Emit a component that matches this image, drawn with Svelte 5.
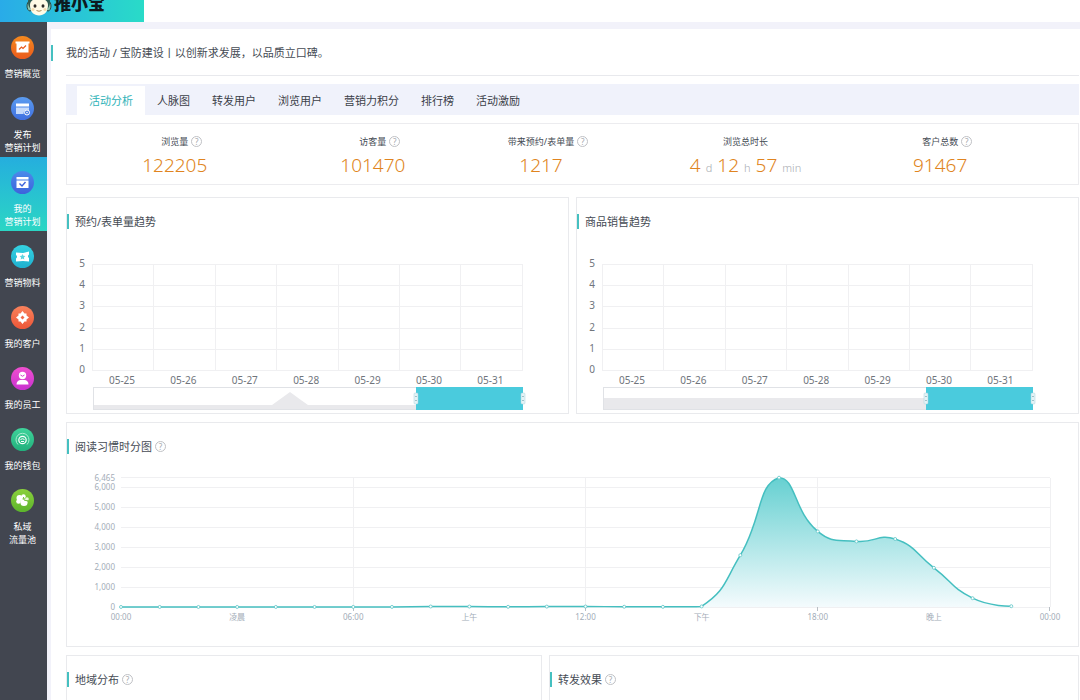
<script lang="ts">
  interface NavItem {
    icon: string;
    lines: string[];
    from: string;
    to: string;
  }

  interface Point {
    x: number;
    y: number;
  }

  const nav: NavItem[] = [
    { icon: 'board', lines: ['营销概览'], from: '#f58a1f', to: '#ea5a1c' },
    { icon: 'publish', lines: ['发布', '营销计划'], from: '#5b9cf0', to: '#3f6fe0' },
    { icon: 'plan', lines: ['我的', '营销计划'], from: '#4a8bea', to: '#3d63dc' },
    { icon: 'ticket', lines: ['营销物料'], from: '#35d3e2', to: '#1fb0cf' },
    { icon: 'target', lines: ['我的客户'], from: '#f9825c', to: '#ec5638' },
    { icon: 'staff', lines: ['我的员工'], from: '#f04fd0', to: '#c832cf' },
    { icon: 'wallet', lines: ['我的钱包'], from: '#3fd39b', to: '#22b07c' },
    { icon: 'pool', lines: ['私域', '流量池'], from: '#8bd03c', to: '#5cb42c' }
  ];

  const tabs = ['活动分析', '人脉图', '转发用户', '浏览用户', '营销力积分', '排行榜', '活动激励'];

  const stats = [
    { label: '浏览量', help: true, parts: [['122205', '']] },
    { label: '访客量', help: true, parts: [['101470', '']] },
    { label: '带来预约/表单量', help: true, parts: [['1217', '']] },
    { label: '浏览总时长', help: false, parts: [['4', 'd'], ['12', 'h'], ['57', 'min']] },
    { label: '客户总数', help: true, parts: [['91467', '']] }
  ];

  const days = ['05-25', '05-26', '05-27', '05-28', '05-29', '05-30', '05-31'];
  const trends = [
    { title: '预约/表单量趋势', shadow: 'M26 176H205L223 163L241 176H349V181H26Z' },
    { title: '商品销售趋势', shadow: 'M26 169H349V181H26Z' }
  ];

  const hours = ['00:00', '凌晨', '06:00', '上午', '12:00', '下午', '18:00', '晚上', '00:00'];
  const readTicks = [6465, 6000, 5000, 4000, 3000, 2000, 1000, 0];
  const reads = [2, 3, 2, 2, 3, 3, 5, 4, 25, 22, 10, 20, 24, 12, 8, 30, 2590, 6465, 3780, 3280, 3400, 1960, 440, 40];

  let activeTab = $state(0);
  let activeNav = $state(2);

  const left = 54;
  const step = 929 / 24;
  const readY = (v: number) => 153 - v * 0.02;
  const points: Point[] = reads.map((v, i) => ({ x: left + i * step, y: readY(v) }));

  // smooth line, control points are kept between the lowest and highest value
  function smooth(pts: Point[]) {
    const top = Math.min(...pts.map((p) => p.y));
    const bottom = Math.max(...pts.map((p) => p.y));
    const clamp = (y: number) => Math.min(Math.max(y, top), bottom);
    let d = `M${pts[0].x} ${pts[0].y}`;
    let out = pts[0];
    for (let i = 1; i < pts.length; i++) {
      const prev = pts[i - 1];
      const p = pts[i];
      const next = pts[i + 1];
      let cin = p;
      let cout = p;
      if (next) {
        const a = Math.hypot(p.x - prev.x, p.y - prev.y);
        const b = Math.hypot(next.x - p.x, next.y - p.y);
        const r = b / (a + b);
        const vx = (next.x - prev.x) * 0.5;
        const vy = (next.y - prev.y) * 0.5;
        cin = { x: p.x - vx * (1 - r), y: clamp(p.y - vy * (1 - r)) };
        cout = { x: p.x + vx * r, y: clamp(p.y + vy * r) };
      }
      d += `C${out.x} ${out.y} ${cin.x} ${cin.y} ${p.x} ${p.y}`;
      out = cout;
    }
    return d;
  }

  const line = smooth(points);
  const area = `${line}V153H${left}Z`;
</script>

{#snippet help()}
  <span class="help" aria-hidden="true">?</span>
{/snippet}

<div class="app">
  <header class="top">
    <a class="brand" href="#home">
      <svg width="26" height="26" viewBox="0 0 26 26" aria-hidden="true">
        <ellipse cx="4" cy="16" rx="3" ry="5" fill="#8cc4ae" stroke="#2b4a45" />
        <ellipse cx="22" cy="16" rx="3" ry="5" fill="#8cc4ae" stroke="#2b4a45" />
        <circle cx="13" cy="12" r="11" fill="#2c5a52" />
        <path d="M4 15C4 6 22 6 22 15C22 22 18 25.500 13 25.500S4 22 4 15Z" fill="#fffbe6" />
        <ellipse cx="9" cy="16" rx="1.500" ry="1.800" fill="#2d2a26" />
        <ellipse cx="17" cy="16" rx="1.500" ry="1.800" fill="#2d2a26" />
        <circle cx="7" cy="19.500" r="1.500" fill="#f6dcae" />
        <circle cx="19" cy="19.500" r="1.500" fill="#f6dcae" />
        <path d="M10.500 20.500Q13 22 15.500 20.500" fill="none" stroke="#a98a5a" />
      </svg>
      <span>推小宝</span>
    </a>
  </header>

  <div class="body">
    <nav class="side">
      {#each nav as item, i}
        <button class="nav-item" class:active={activeNav === i} onclick={() => (activeNav = i)}>
          <svg width="23" height="23" viewBox="0 0 23 23" aria-hidden="true">
            <defs>
              <linearGradient id="nav-{i}" x1="0" y1="0" x2="0" y2="1">
                <stop offset="0" stop-color={item.from} />
                <stop offset="1" stop-color={item.to} />
              </linearGradient>
            </defs>
            <circle cx="11.5" cy="11.5" r="11.5" fill="url(#nav-{i})" />
            {#if item.icon === 'board'}
              <path d="M4.500 5.500h14v2h-1v9h-12v-9h-1z" fill="#fff" />
              <path d="M8 13.500l2.500-2.500 1.500 1.500 3-3" fill="none" stroke="#ea5a1c" stroke-width="1.2" />
            {:else if item.icon === 'publish'}
              <path d="M5 6.500h13v3H5z" fill="#fff" />
              <path d="M5 10.500h13V13a4 4 0 0 0-5.500 4H5z" fill="#c5dafb" />
              <circle cx="16" cy="15.5" r="2.5" fill="#4a7ee4" stroke="#fff" />
              <circle cx="16" cy="15.5" r=".8" fill="#fff" />
            {:else if item.icon === 'plan'}
              <path d="M5.500 6h12v2.500h-12zM5.500 9.500h12V17h-12z" fill="#fff" />
              <path d="M8.500 12.500l2.500 2.500 3.500-4" fill="none" stroke="#3d63dc" stroke-width="1.4" />
            {:else if item.icon === 'ticket'}
              <path d="M5 7.500l7 .5 6-1.500v3a2 2 0 0 0 0 3.500v3.500l-6-.5-7 .5v-3a2 2 0 0 0 0-3.500z" fill="#fff" />
              <path d="M11.500 9l.9 1.800 2 .3-1.500 1.400.4 2-1.800-1-1.800 1 .4-2-1.500-1.400 2-.3z" fill="#5fd5df" />
            {:else if item.icon === 'target'}
              <path d="M11.500 5l2 2.500h2v2l2.500 2-2.500 2v2h-2l-2 2.500-2-2.500h-2v-2l-2.500-2 2.500-2v-2h2z" fill="#fff" />
              <path d="M11.500 9.500l2 2-2 2-2-2z" fill="#f0694a" />
            {:else if item.icon === 'staff'}
              <circle cx="11.5" cy="8.5" r="3.7" fill="#fff" />
              <path d="M9.500 8q2 2.500 4 0" fill="none" stroke="#d93bce" />
              <path d="M5.500 17.500c0-3 2-4.500 4-4.500h4c2 0 4 1.500 4 4.500z" fill="#fff" />
            {:else if item.icon === 'wallet'}
              <path d="M7 16.500a6.500 6.500 0 1 1 9 0" fill="none" stroke="#a8ecd0" />
              <circle cx="11.5" cy="12" r="3.7" fill="none" stroke="#fff" stroke-width="1.2" />
              <path d="M9.500 11.500q2-1.500 4 0M10 13.500h3" fill="none" stroke="#fff" />
            {:else}
              <circle cx="8.5" cy="9" r="3" fill="#fff" />
              <circle cx="12.5" cy="7.5" r="2.2" fill="#fff" />
              <circle cx="16" cy="10" r="1.8" fill="#e7f7d5" />
              <circle cx="7.5" cy="12.5" r="2.3" fill="#fff" />
              <circle cx="13" cy="13.5" r="3.6" fill="#fff" />
              <path d="M12.500 8l.5 3 4 1" fill="none" stroke="#6cbc32" />
            {/if}
          </svg>
          <span class="nav-label">
            {#each item.lines as text}
              <span>{text}</span>
            {/each}
          </span>
        </button>
      {/each}
    </nav>

    <main class="main">
      <div class="panel">
        <h1 class="crumb">我的活动 / 宝防建设丨以创新求发展，以品质立口碑。</h1>

        <div class="content">
          <div class="tabs" role="tablist">
            {#each tabs as tab, i}
              <button class="tab" class:active={activeTab === i} role="tab" aria-selected={activeTab === i} onclick={() => (activeTab = i)}>{tab}</button>
            {/each}
          </div>

          <div class="stats">
            {#each stats as stat}
              <div class="stat">
                <div class="stat-label">
                  {stat.label}
                  {#if stat.help}{@render help()}{/if}
                </div>
                <div class="stat-value">
                  {#each stat.parts as [num, unit]}
                    <span>{num}</span>
                    {#if unit}<small>{unit}</small>{/if}
                  {/each}
                </div>
              </div>
            {/each}
          </div>

          <div class="row halves">
            {#each trends as trend}
              <section class="card">
                <h2>{trend.title}</h2>
                <svg class="chart" viewBox="0 0 501 184">
                  <g class="grid">
                    {#each [5, 4, 3, 2, 1, 0] as _, i}
                      <line x1="25" x2="455" y1={35.5 + Math.round(i * 21.2)} y2={35.5 + Math.round(i * 21.2)} />
                    {/each}
                    {#each Array(8) as _, i}
                      <line x1={25.5 + Math.round(i * 61.4)} x2={25.5 + Math.round(i * 61.4)} y1="35" y2="142" />
                    {/each}
                  </g>
                  <g class="axis">
                    {#each [5, 4, 3, 2, 1, 0] as n, i}
                      <text x="18" y={38 + i * 21.2} text-anchor="end">{n}</text>
                    {/each}
                    {#each days as day, i}
                      <text x={55 + i * 61.4} y="155" text-anchor="middle">{day}</text>
                    {/each}
                  </g>
                  <path d={trend.shadow} fill="#e9e9ec" />
                  <rect x="26.5" y="158.5" width="429" height="22" fill="none" stroke="#e0e2e6" />
                  <rect x="349" y="158" width="107" height="23" fill="#4acbdd" />
                  {#each [349, 456] as x}
                    <rect x={x - 2} y="164" width="4" height="11" rx="1" fill="#e4f3f6" stroke="#a9d3dc" stroke-width=".5" />
                    <path d="M{x - 1} 167.500h2M{x - 1} 171.500h2" stroke="#8fb4bd" stroke-width=".8" />
                  {/each}
                </svg>
              </section>
            {/each}
          </div>

          <section class="card">
            <h2>阅读习惯时分图{@render help()}</h2>
            <svg class="chart" viewBox="0 0 1011 192">
              <defs>
                <linearGradient id="fill" x1="0" y1="0" x2="0" y2="1">
                  <stop offset="0" stop-color="#66d0d1" />
                  <stop offset="1" stop-color="#f4fbfd" />
                </linearGradient>
              </defs>
              <g class="grid">
                {#each readTicks as tick}
                  <line x1="54" x2="983" y1={Math.floor(readY(tick)) + 0.5} y2={Math.floor(readY(tick)) + 0.5} />
                {/each}
                {#each [1, 2, 3, 4] as q}
                  <line x1={Math.floor(left + q * step * 6) + 0.5} x2={Math.floor(left + q * step * 6) + 0.5} y1="24" y2="153" />
                {/each}
              </g>
              <g class="axis faint">
                {#each readTicks as tick}
                  <text x="48" y={readY(tick) + 3} text-anchor="end">{tick.toLocaleString('en-US')}</text>
                {/each}
                {#each hours as hour, i}
                  <text x={left + i * step * 3} y="166" text-anchor="middle">{hour}</text>
                {/each}
              </g>
              <path d="M286.500 153v4M518.500 153v4M750.500 153v4M982.500 153v4" stroke="#b8bec4" />
              <path d={area} fill="url(#fill)" />
              <path d={line} fill="none" stroke="#45bfc0" stroke-width="1.5" />
              {#each points as p}
                <circle cx={p.x} cy={p.y} r="1.5" fill="#fff" stroke="#5cc5c6" stroke-width=".8" />
              {/each}
            </svg>
          </section>

          <div class="row split">
            <section class="card last">
              <h2>地域分布{@render help()}</h2>
            </section>
            <section class="card last">
              <h2>转发效果{@render help()}</h2>
            </section>
          </div>
        </div>
      </div>
    </main>
  </div>
</div>

<style>
  :global(body) {
    margin: 0;
  }

  .app {
    height: 100vh;
    display: flex;
    flex-direction: column;
    overflow: hidden;
    background: #fff;
    color: #454b54;
    font-family: "Noto Sans", "Noto Sans CJK SC", sans-serif;
    font-size: 11px;
  }

  button {
    border: none;
    background: none;
    padding: 0;
    font: inherit;
    color: inherit;
    cursor: pointer;
  }

  .top {
    height: 22px;
    flex-shrink: 0;
    display: flex;
    background: #fff;
  }

  .brand {
    width: 144px;
    box-sizing: border-box;
    padding: 0 0 6px 26px;
    display: flex;
    align-items: flex-end;
    gap: 2px;
    overflow: hidden;
    background: linear-gradient(90deg, #29abe8, #29dbc8);
    color: #0d1a20;
    text-decoration: none;
    font-size: 17px;
    line-height: 18px;
    font-weight: 900;
  }

  .brand svg {
    flex-shrink: 0;
  }

  .brand span {
    padding-bottom: 3px;
  }

  .body {
    flex: 1;
    min-height: 0;
    display: flex;
  }

  .side {
    width: 47px;
    flex-shrink: 0;
    background: #424650;
    color: #fff;
  }

  .nav-item {
    width: 100%;
    padding: 14px 2px 3px 0;
    display: flex;
    flex-direction: column;
    align-items: center;
    gap: 8px;
    font-size: 9px;
    line-height: 13px;
  }

  .nav-item.active {
    background: linear-gradient(180deg, #25aede, #2bd6c4);
  }

  .nav-item svg {
    display: block;
  }

  .nav-label {
    display: flex;
    flex-direction: column;
    align-items: center;
    white-space: nowrap;
  }

  .main {
    flex: 1;
    min-width: 0;
    padding: 7px 0 0 4px;
    overflow-y: auto;
    scrollbar-width: none;
    background: #f2f2fa;
  }

  .panel {
    padding: 16px 1px 20px 0;
    background: #fff;
  }

  .crumb {
    margin: 0 0 14px;
    padding-left: 13px;
    border-left: 2px solid #45c0c0;
    font-size: 11px;
    line-height: 16px;
    font-weight: 400;
  }

  .content {
    margin-left: 15px;
    padding-top: 8px;
    border-top: 1px solid #e8e9ed;
  }

  .tabs {
    display: flex;
    padding: 2px 11px 0;
    background: #f0f2fb;
  }

  .tab {
    padding: 0 11px;
    line-height: 29px;
    color: #3b4048;
  }

  .tab.active {
    padding: 0 12px;
    margin-right: 1px;
    background: #fff;
    color: #2fb3b8;
  }

  .stats {
    margin: 8px 0 12px;
    padding: 12px 70px 5px 0;
    display: grid;
    grid-template-columns: 216fr 181fr 156fr 254fr 136fr;
    border: 1px solid #ececef;
  }

  .stat {
    display: flex;
    flex-direction: column;
    align-items: center;
  }

  .stat-label {
    position: relative;
    font-size: 9px;
    line-height: 12px;
    white-space: nowrap;
  }

  .stat-label .help {
    position: absolute;
    left: 100%;
    top: 0;
  }

  .stat-value {
    margin-top: 6px;
    display: flex;
    align-items: baseline;
    gap: 5px;
    font-size: 19px;
    line-height: 22px;
    font-weight: 300;
    color: #e08420;
  }

  .stat-value small {
    font-size: 11px;
    color: #a9acb2;
  }

  .help {
    width: 11px;
    height: 11px;
    margin-left: 3px;
    box-sizing: border-box;
    display: inline-block;
    border: 1px solid #bfc1c5;
    border-radius: 50%;
    font-size: 8px;
    line-height: 9px;
    text-align: center;
    color: #a5a8ad;
  }

  .row {
    display: grid;
    gap: 7px;
    margin-bottom: 8px;
  }

  .halves {
    grid-template-columns: 1fr 1fr;
  }

  .split {
    grid-template-columns: 476fr 530fr;
    margin-top: 8px;
  }

  .card {
    min-width: 0;
    padding-top: 16px;
    border: 1px solid #e9eaed;
  }

  .card.last {
    min-height: 200px;
  }

  .card h2 {
    margin: 0;
    padding-left: 6px;
    border-left: 2px solid #45c0c0;
    display: flex;
    align-items: center;
    font-size: 11px;
    line-height: 15px;
    font-weight: 400;
  }

  .chart {
    display: block;
    width: 100%;
  }

  .grid line {
    stroke: #f0f0f2;
    stroke-width: 1;
  }

  .axis text {
    font-size: 10px;
    fill: #70757c;
  }

  .axis.faint text {
    font-size: 8px;
    fill: #a3adb8;
  }
</style>
